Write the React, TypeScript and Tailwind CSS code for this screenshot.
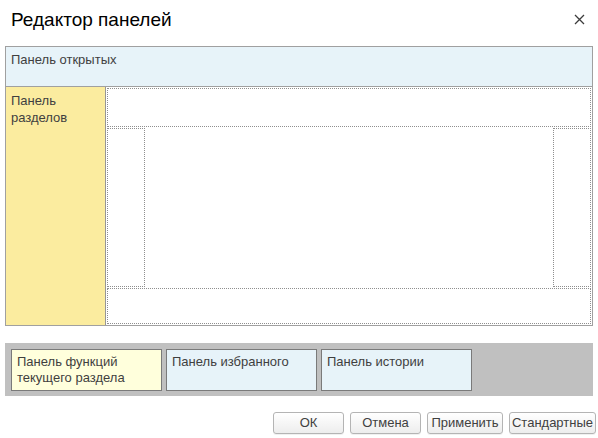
import React from "react";

// dialog "Редактор панелей" - panel layout editor

const font = { fontFamily: '"Liberation Sans", Arial, sans-serif' };

const CloseIcon = () => (
  <svg width="11" height="11" viewBox="0 0 11 11" className="block">
    <path d="M1 1 L10 10 M10 1 L1 10" stroke="#3c3c3c" strokeWidth="1.3" />
  </svg>
);

const DialogButton = ({ label, width }: { label: string; width: string }) => (
  <button
    className={`${width} h-[22px] rounded-[3px] border border-[#b4b4b4] bg-gradient-to-b from-white to-[#ededed] text-[13px] leading-[20px] text-[#404040] shadow-[0_1px_0_rgba(0,0,0,0.06)]`}
  >
    {label}
  </button>
);

export default function App() {
  return (
    <div className="w-[598px] h-[438px] bg-white overflow-hidden" style={font}>
      {/* header */}
      <div className="h-[46px] flex items-start justify-between pl-[11px] pr-[13px]">
        <div className="pt-[9px] text-[19px] leading-[22px] text-black">Редактор панелей</div>
        <div className="pt-[14px]">
          <CloseIcon />
        </div>
      </div>

      {/* main layout preview */}
      <div className="mx-[5px] w-[588px] h-[280px] border border-[#a0a0a0] flex flex-col">
        <div className="h-[40px] shrink-0 bg-[#e7f3f9] border-b border-[#a0a0a0] px-[5px] pt-[5px] text-[13px] leading-[16px] text-[#3f3f3f]">
          Панель открытых
        </div>
        <div className="flex flex-1 min-h-0">
          <div className="w-[100px] shrink-0 bg-[#fbec9f] border-r border-[#969696] px-[5px] pt-[5px] text-[13px] leading-[17px] text-[#3f3f3f]">
            Панель
            <br />
            разделов
          </div>
          <div className="flex-1 flex flex-col gap-px p-px">
            <div className="h-[39px] shrink-0 border border-dotted border-[#8f8f8f]" />
            <div className="h-[159px] shrink-0 flex justify-between">
              <div className="w-[38px] border border-dotted border-[#8f8f8f]" />
              <div className="w-[38px] border border-dotted border-[#8f8f8f]" />
            </div>
            <div className="flex-1 border border-dotted border-[#8f8f8f]" />
          </div>
        </div>
      </div>

      {/* bottom panels */}
      <div className="mx-[5px] mt-[17px] w-[588px] h-[53px] bg-[#c0c0c0] flex gap-[4px] p-[6px]">
        <div className="w-[151px] h-[42px] border border-[#7a7a7a] bg-[#ffffdc] px-[5px] pt-[4px] text-[13px] leading-[16px] text-[#3f3f3f]">
          Панель функций
          <br />
          текущего раздела
        </div>
        <div className="w-[151px] h-[42px] border border-[#7a7a7a] bg-[#e7f3f9] px-[5px] pt-[4px] text-[13px] leading-[16px] text-[#3f3f3f]">
          Панель избранного
        </div>
        <div className="w-[151px] h-[42px] border border-[#7a7a7a] bg-[#e7f3f9] px-[5px] pt-[4px] text-[13px] leading-[16px] text-[#3f3f3f]">
          Панель истории
        </div>
      </div>

      {/* buttons */}
      <div className="mt-[16px] flex justify-end gap-[6px] pr-[2px]">
        <DialogButton label="ОК" width="w-[71px]" />
        <DialogButton label="Отмена" width="w-[71px]" />
        <DialogButton label="Применить" width="w-[76px]" />
        <DialogButton label="Стандартные" width="w-[87px]" />
      </div>
    </div>
  );
}
